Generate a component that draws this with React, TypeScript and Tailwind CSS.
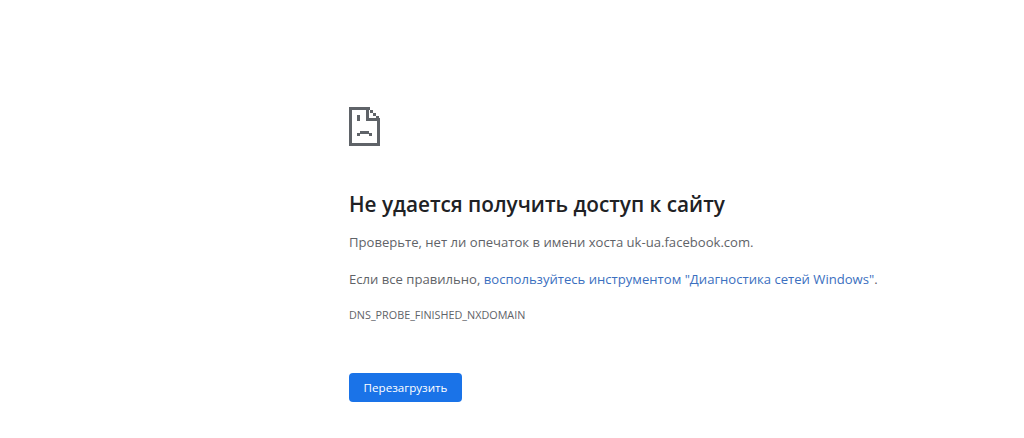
const FONT = "font-['Open_Sans','Noto_Sans',sans-serif]";

function SadTab() {
  return (
    <svg width="31" height="39" viewBox="0 0 31 39" className="block">
      <g fill="#5f6368">
        <rect x="0" y="0" width="3" height="39" />
        <rect x="0" y="36" width="31" height="3" />
        <rect x="28" y="13" width="3" height="26" />
        <rect x="0" y="0" width="21" height="3" />
        <rect x="17" y="0" width="3" height="14" />
        <rect x="17" y="11" width="14" height="3" />
        <rect x="21" y="3" width="3" height="3" />
        <rect x="24" y="6" width="3" height="3" />
        <rect x="27" y="9" width="3" height="3" />
        <rect x="8" y="8" width="3" height="6" />
        <rect x="8" y="26" width="3" height="3" />
        <rect x="11" y="24" width="9" height="3" />
        <rect x="20" y="26" width="3" height="3" />
      </g>
    </svg>
  );
}

export default function App() {
  return (
    <div className={`${FONT} h-[438px] w-[1024px] overflow-hidden bg-white pl-[349px] pt-[107px]`}>
      <SadTab />
      <h1 className="mt-[43px] text-[20.75px] font-semibold leading-[30px] text-[#202124]">
        Не удается получить доступ к сайту
      </h1>
      <p className="mt-[11px] text-[13.1px] leading-[24px] text-[#5f6368]">
        Проверьте, нет ли опечаток в имени хоста uk-ua.facebook.com.
      </p>
      <p className="mt-[13px] text-[13.1px] leading-[24px] text-[#5f6368]">
        Если все правильно, <span className="text-[#3b6fc0]">воспользуйтесь инструментом "Диагностика сетей Windows"</span>.
      </p>
      <p className="mt-[16px] text-[10.8px] leading-[16px] text-[#5f6368]">DNS_PROBE_FINISHED_NXDOMAIN</p>
      <button className="mt-[50px] flex h-[29px] w-[113px] items-center justify-center rounded bg-[#1a73e8] text-[11.6px] font-medium text-white">
        Перезагрузить
      </button>
    </div>
  );
}
